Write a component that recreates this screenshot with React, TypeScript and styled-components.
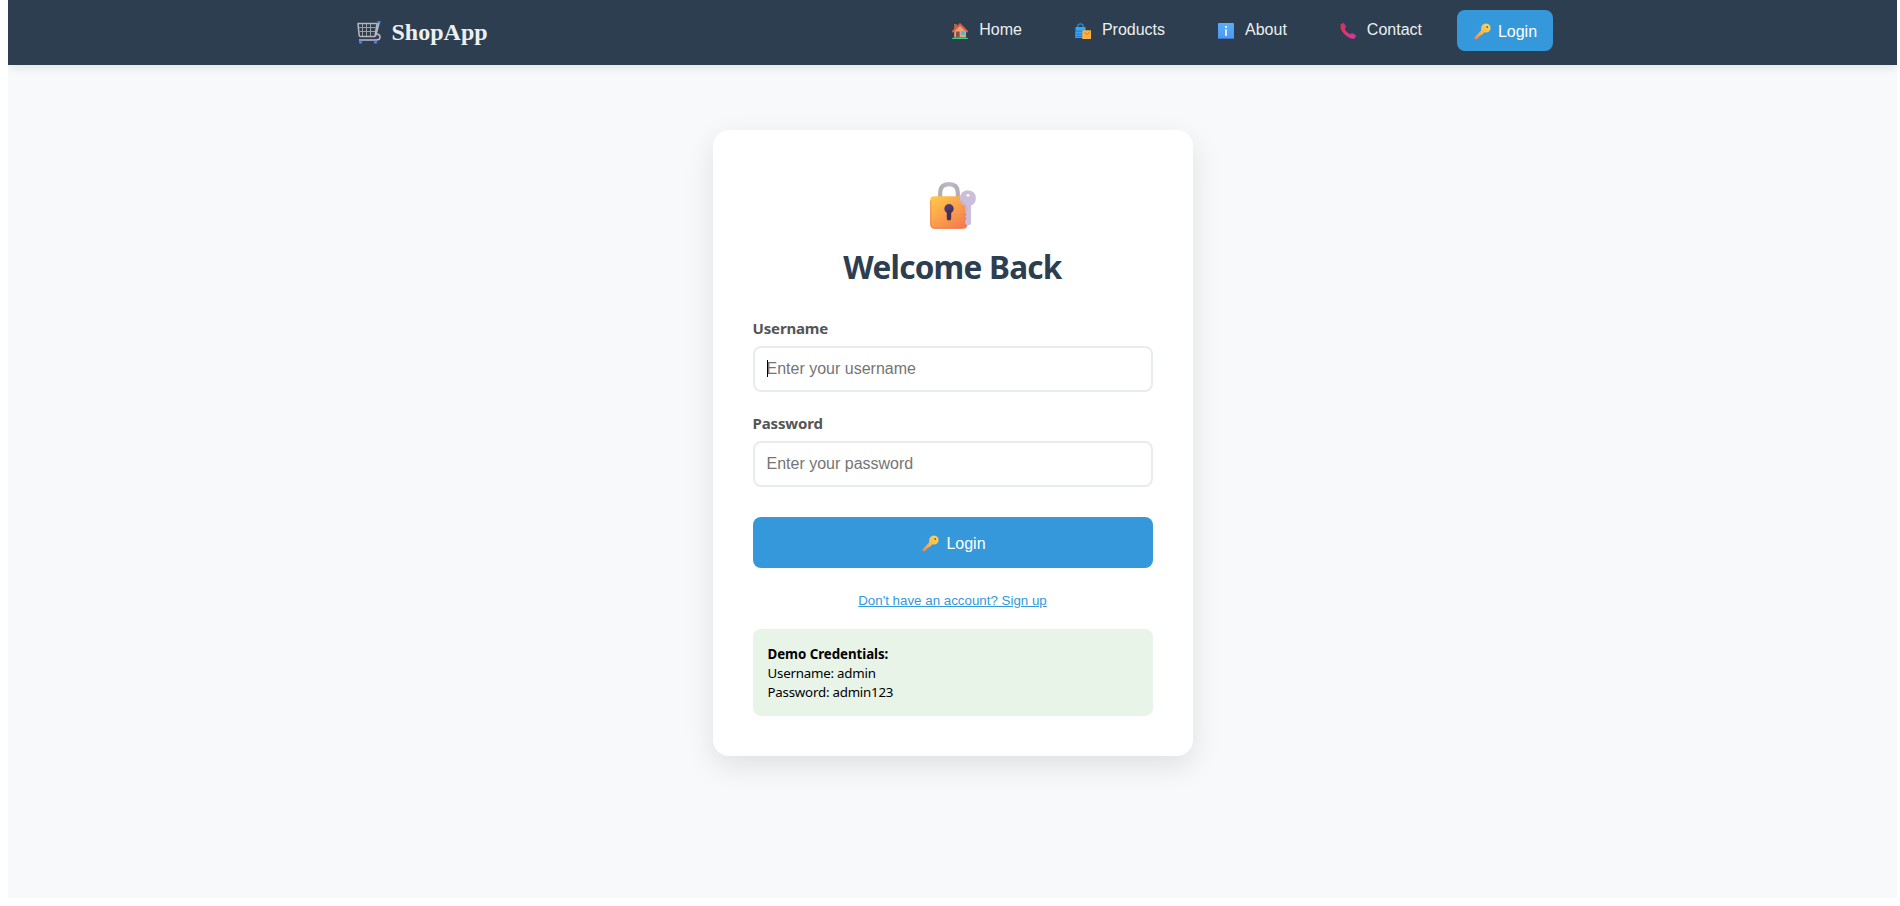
import React from "react";
import styled, { createGlobalStyle } from "styled-components";

const sans = `"Liberation Sans", Arial, sans-serif`;
const ui = `"Segoe UI", "Noto Sans", sans-serif`;

const GlobalStyle = createGlobalStyle`
  * { box-sizing: border-box; }
  html { background: #fff; }
  body { margin: 0 3px 8px 8px; font-family: ${ui}; overflow: hidden; }
`;

const Page = styled.div`
  height: 898px;
  background: #f8f9fb;
  display: flex;
  flex-direction: column;
  align-items: center;
`;

const Header = styled.header`
  width: 100%;
  height: 65px;
  flex: none;
  background: #2c3e50;
  box-shadow: 0 2px 10px rgba(0, 0, 0, 0.1);
  display: flex;
  justify-content: center;
`;

const HeaderInner = styled.div`
  width: 1200px;
  height: 61px;
  display: flex;
  align-items: center;
  justify-content: space-between;
`;

const Logo = styled.div`
  display: flex;
  align-items: center;
  gap: 11px;
  padding: 2px 0 0 4px;
  font: bold 24px/28px "Liberation Serif", "Times New Roman", serif;
  color: #ecf0f1;

  svg { margin-top: 2px; }
`;

const Nav = styled.nav`
  display: flex;
  align-items: center;
`;

const NavLinks = styled.div`
  display: flex;
  gap: 50px;
  margin-right: 34.5px;
`;

const NavLink = styled.a`
  display: flex;
  align-items: center;
  gap: 11px;
  padding-left: 3px;
  font: 16px/18px ${sans};
  color: #ecf0f1;
  height: 20px;
  margin-top: -1px;

  svg { margin-top: 2px; }
`;

const Button = styled.button<{ $wide?: boolean }>`
  display: flex;
  flex: none;
  align-items: center;
  justify-content: center;
  gap: 7px;
  border: 0;
  border-radius: 8px;
  background: #3498db;
  color: #fff;
  font: 16px/18px ${sans};
  width: ${(p) => (p.$wide ? "100%" : "96px")};
  height: ${(p) => (p.$wide ? "51px" : "41px")};
  margin-top: ${(p) => (p.$wide ? "9px" : "0")};
  padding: ${(p) => (p.$wide ? "2px 0 0 3px" : "2px 0 0 2px")};
`;

const Card = styled.main`
  width: 480px;
  height: 626px;
  margin-top: 65px;
  padding: 52px 40px 40px;
  background: #fff;
  border-radius: 16px;
  box-shadow: 0 10px 30px rgba(0, 0, 0, 0.1);
  display: flex;
  flex-direction: column;
`;

const LockWrap = styled.div`
  height: 47px;
  padding-left: 177px;
`;

const Title = styled.h1`
  margin: 16px 0 29px;
  font: 700 31.5px/44px ${ui};
  letter-spacing: -0.75px;
  color: #2c3e50;
  text-align: center;
  white-space: nowrap;
`;

const Field = styled.div`
  height: 95px;
`;

const Label = styled.label`
  display: block;
  height: 28px;
  font: 700 15px/20px ${ui};
  letter-spacing: -0.15px;
  color: #555;
`;

const InputBox = styled.div`
  position: relative;
`;

const Input = styled.input`
  display: block;
  width: 100%;
  height: 46px;
  padding: 0 12px;
  border: 2px solid #e9ecef;
  border-radius: 8px;
  outline: none;
  background: #fff;
  font: 16px ${sans};

  &::placeholder { color: #757575; opacity: 1; }
`;

const Caret = styled.span`
  position: absolute;
  left: 14px;
  top: 14px;
  width: 1px;
  height: 17px;
  background: #000;
`;

const SignUp = styled.a`
  align-self: center;
  margin: 25px 0 21px;
  font: 13.333px/15px ${sans};
  color: #3498db;
  text-decoration: underline;
`;

const Demo = styled.div`
  height: 87px;
  padding: 16px 15px 14px;
  border-radius: 8px;
  background: #e8f4e8;
  color: #000;
  font: 13.3px/19px ${ui};
`;

const DemoTitle = styled.strong`
  display: block;
  font-weight: 700;
  letter-spacing: -0.05px;
`;

const DemoLine = styled.div`
  letter-spacing: -0.22px;
`;

const Cart = () => (
  <svg width="24" height="24" viewBox="0 0 24 24" fill="none">
    <path d="M1 2.5h19l-2 13H3.5Q2.3 15.5 2.1 14z" stroke="#b9b2b9" strokeWidth="1.6" strokeLinejoin="round" />
    <path d="M5.5 3v12M9.5 3v12M13.5 3v12M2 6.5h16.5M2.5 10.5h15.5" stroke="#9c9fa6" strokeWidth="1" />
    <path d="M22 1.5l-3.5 13.5" stroke="#bdb6bd" strokeWidth="1.8" />
    <path d="M20 13q3.3 .5 3 3.5-.3 2.5-3.5 2.5H2" stroke="#c3b6cd" strokeWidth="1.5" />
    <path d="M20.5 1h3" stroke="#3f8be8" strokeWidth="2" />
    <circle cx="3.5" cy="21.2" r="1.6" fill="#3d83e6" />
    <circle cx="18.5" cy="21.2" r="1.6" fill="#3d83e6" />
  </svg>
);

const House = () => (
  <svg width="16" height="16" viewBox="0 0 16 16">
    <rect x="2" y="1" width="3" height="6" fill="#9a6b4a" />
    <path d="M2.2 8L8 2.5 14 8v6.5H2.2z" fill="#dfa67e" />
    <path d="M.8 8.5L8 1.4l7.2 7.1" fill="none" stroke="#e8573c" strokeWidth="1.9" strokeLinecap="round" />
    <rect x="4" y="8.5" width="3.6" height="6" fill="#8a4f48" />
    <rect x="9.3" y="8.3" width="3.4" height="3.5" fill="#45b2f0" />
    <rect x="0" y="14.7" width="16" height="1.2" rx=".6" fill="#3fd07c" />
  </svg>
);

const Bags = () => (
  <svg width="16" height="16" viewBox="0 0 16 16">
    <path d="M2.7 5V3.3Q2.9 .8 5.5 .8T8.3 3.3V5" fill="none" stroke="#2b8fc0" strokeWidth="1.3" />
    <path d="M.5 4h10l.5 11H0z" fill="#35a6f1" />
    <path d="M.3 8.2h10.5M.2 11h10.6M.1 13.5h10.8" stroke="#2470d7" strokeWidth=".9" />
    <path d="M7.5 7.2H16V16H7.2z" fill="#fbb13c" />
    <path d="M9.8 9.2q1 2.5 2.5 2t2-2.5" fill="none" stroke="#df742c" strokeWidth=".9" />
  </svg>
);

const Info = () => (
  <svg width="16" height="16" viewBox="0 0 16 16">
    <defs>
      <linearGradient id="info" x1="0" y1="0" x2="0" y2="1">
        <stop stopColor="#58adfc" />
        <stop offset="1" stopColor="#4d97f2" />
      </linearGradient>
    </defs>
    <rect width="16" height="16" rx="1" fill="url(#info)" />
    <path d="M0 15.5h16" stroke="#3f74cf" />
    <rect x="7.1" y="3" width="1.8" height="1.8" fill="#fff" />
    <rect x="7.2" y="6.3" width="1.6" height="6.7" fill="#fff" />
  </svg>
);

const Phone = () => (
  <svg width="16" height="16" viewBox="0 0 16 16">
    <defs>
      <linearGradient id="phone" x1="0" y1="0" x2="1" y2="1">
        <stop stopColor="#e92b43" />
        <stop offset="1" stopColor="#d936a4" />
      </linearGradient>
    </defs>
    <path
      d="M.8 1.3Q2.7-.7 4 .8L5.5 3.2Q6.1 4.5 4.7 5.5 5.9 9.5 10.5 11.2 11.4 9.8 12.9 10.5L15.3 12Q16.7 13.1 14.7 15.2 11.5 17 6.2 12.8-.7 7.2 .8 1.3z"
      fill="url(#phone)"
    />
    <path d="M3.5 .6l2 3M12.3 10.6l3 2" stroke="#8d45b5" strokeWidth="1.1" strokeLinecap="round" />
  </svg>
);

const Key = ({ id }: { id: string }) => (
  <svg width="17" height="17" viewBox="0 0 17 17">
    <defs>
      <linearGradient id={id} x1="1" y1="0" x2="0" y2="1">
        <stop stopColor="#ffd94d" />
        <stop offset=".5" stopColor="#fcbb47" />
        <stop offset="1" stopColor="#f5804d" />
      </linearGradient>
    </defs>
    <path
      d="M8.2 2.3Q10.7-.4 14.2 1.1 17.6 3.1 16.2 7 14.5 10.3 10.5 9.3L8.8 10.9 7.9 12 6.7 12.1 6.3 13.3 4.9 13.7 3.2 15.9Q1.5 17 .5 15.5 .1 14.6 1 13.8L7.3 7.3Q6.6 4.3 8.2 2.3z"
      fill={`url(#${id})`}
    />
    <circle cx="13.2" cy="3.9" r="1" fill="#48748f" />
  </svg>
);

const Lock = () => (
  <svg width="46" height="47" viewBox="0 0 46 47">
    <defs>
      <linearGradient id="lockBody" x1="0" y1="0" x2=".8" y2="1">
        <stop stopColor="#ffcc4b" />
        <stop offset=".45" stopColor="#fba84b" />
        <stop offset="1" stopColor="#f57b4f" />
      </linearGradient>
      <linearGradient id="shackle" x1="0" y1="0" x2="1" y2="0">
        <stop stopColor="#b0afb1" />
        <stop offset=".5" stopColor="#c4b5c9" />
        <stop offset="1" stopColor="#b2aeb5" />
      </linearGradient>
      <linearGradient id="hole" x1="0" y1="0" x2="1" y2="1">
        <stop stopColor="#574482" />
        <stop offset="1" stopColor="#402b52" />
      </linearGradient>
    </defs>
    <path d="M10.2 18V10.5Q10.6 2.2 19 2.2T27.800 10.5V18" fill="none" stroke="url(#shackle)" strokeWidth="4.2" />
    <path d="M4 14.3H33Q37.5 14.3 37.5 19V42Q37.5 46.7 33 46.7H4.5Q.2 46.7.2 42V18.3Q.2 14.3 4 14.3z" fill="url(#lockBody)" />
    <path d="M.8 18.5V42Q.8 46.2 4.8 46.2H32.5" fill="none" stroke="#ef7752" strokeWidth="1" opacity=".75" />
    <circle cx="19" cy="26.7" r="4.7" fill="url(#hole)" />
    <path d="M16.8 29h4.4v7.3Q21.2 38.5 19 38.5T16.8 36.3z" fill="#472f5b" />
    <path d="M31 23l3 3v18l3-1V25" fill="#df824e" opacity=".4" />
    <path
      d="M37.8 8.3Q45.9 9 45.9 16.3 45.5 22 41 23.8V41.5Q40.9 43.3 38.2 43.3 35.4 43.3 35.2 41.3V38.2L36.2 37V35.5L34.9 34.5 36.2 33V31.5L34.9 30.5V24Q29.9 21.8 29.9 16.3 30.2 9 37.8 8.3z"
      fill="#cbbedb"
    />
    <path d="M31 18Q32.5 22.5 36 23.3V30" fill="none" stroke="#b7a4cc" strokeWidth=".8" />
    <circle cx="38" cy="12.8" r="1.9" fill="#fff" />
    <path d="M36.2 12.4Q38 10.2 39.8 12.4" fill="none" stroke="#a99db7" strokeWidth=".8" />
  </svg>
);

const links = [
  { label: "Home", Icon: House },
  { label: "Products", Icon: Bags },
  { label: "About", Icon: Info },
  { label: "Contact", Icon: Phone },
];

export default function App() {
  return (
    <>
      <GlobalStyle />
      <Page>
        <Header>
          <HeaderInner>
            <Logo>
              <Cart />
              ShopApp
            </Logo>
            <Nav>
              <NavLinks>
                {links.map(({ label, Icon }) => (
                  <NavLink key={label}>
                    <Icon />
                    {label}
                  </NavLink>
                ))}
              </NavLinks>
              <Button>
                <Key id="navKey" />
                Login
              </Button>
            </Nav>
          </HeaderInner>
        </Header>
        <Card>
          <LockWrap>
            <Lock />
          </LockWrap>
          <Title>Welcome Back</Title>
          <Field>
            <Label htmlFor="username">Username</Label>
            <InputBox>
              <Input id="username" placeholder="Enter your username" />
              <Caret />
            </InputBox>
          </Field>
          <Field>
            <Label htmlFor="password">Password</Label>
            <Input id="password" type="password" placeholder="Enter your password" />
          </Field>
          <Button $wide>
            <Key id="formKey" />
            Login
          </Button>
          <SignUp>Don't have an account? Sign up</SignUp>
          <Demo>
            <DemoTitle>Demo Credentials:</DemoTitle>
            <DemoLine>Username: admin</DemoLine>
            <DemoLine>Password: admin123</DemoLine>
          </Demo>
        </Card>
      </Page>
    </>
  );
}
